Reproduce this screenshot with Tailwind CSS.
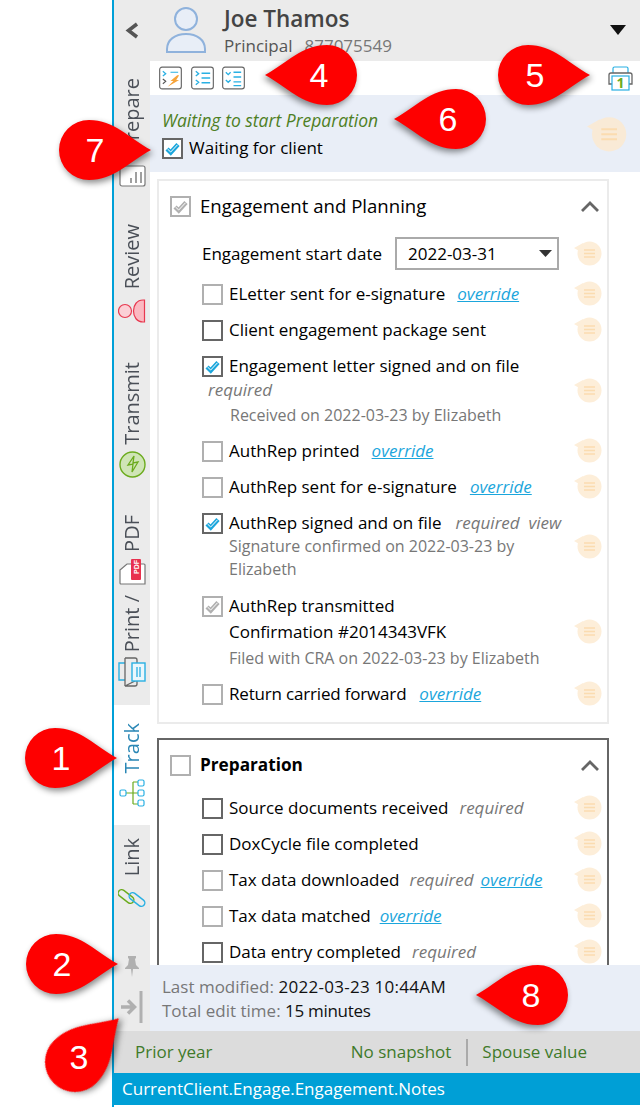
<!DOCTYPE html>
<html lang="en">
<head>
<meta charset="UTF-8">
<title>Track</title>
<script src="https://cdn.jsdelivr.net/npm/@tailwindcss/browser@4"></script>
</head>
<body class="bg-white font-['Open_Sans',sans-serif] text-[17px] text-black">
<svg class="hidden">
  <symbol id="drop" viewBox="0 0 92 60"><path d="M92 30C70 42 55 60 30 60A30 30 0 0 1 30 0C55 0 70 18 92 30Z" fill="#fe0000"/></symbol>
  <symbol id="note" viewBox="0 0 28 28"><circle cx="15.500" cy="13.500" r="12" fill="currentColor"/><path d="M0 8 9 3 7 12Z" fill="currentColor"/><path d="M10 10h11M10 13.500h11M10 17h11" stroke="#fbdcb0" stroke-width="1.300"/></symbol>
  <symbol id="tick" viewBox="0 0 21 21"><path d="M5 11 8.700 14.500 16 6.500" fill="none" stroke="currentColor" stroke-width="4.400"/><path d="M5.500 11 8.700 14 15.500 6.800" fill="none" stroke="#fff" stroke-width="1"/></symbol>
</svg>

<div class="relative h-[1107px] w-[640px] overflow-hidden">
  <div class="ml-[112px] flex h-full flex-col border-l-2 border-[#00a0d8]">
    <div class="flex h-[1031px]">

      <!-- side tabs -->
      <div class="flex w-[36px] shrink-0 flex-col items-center bg-[#ebebeb] text-[20px] text-[#4a4f57]">
        <div class="flex h-[61px] w-full items-center justify-center">
          <svg class="mt-[-1px]" width="14" height="17" viewBox="0 0 14 17"><path d="M12 2 3.500 8.500 12 15" fill="none" stroke="#555" stroke-width="3.600"/></svg>
        </div>
        <div class="flex h-[163px] w-full flex-col items-center pt-[17px]">
          <span class="rotate-180 leading-[36px] [writing-mode:vertical-rl]">Prepare</span>
          <svg class="mt-[13px]" width="27" height="22" viewBox="0 0 27 22"><rect x="1" y="1" width="25" height="20" rx="2" fill="#fff" stroke="#777" stroke-width="1.200"/><path d="M12 18v-5M17 18V7M22 18V7" stroke="#777" stroke-width="1.400"/></svg>
        </div>
        <div class="flex h-[138px] w-full flex-col items-center">
          <span class="rotate-180 leading-[36px] [writing-mode:vertical-rl]">Review</span>
          <svg class="mt-[10px]" width="28" height="24" viewBox="0 0 28 24"><circle cx="7" cy="12" r="6.500" fill="#fbd0d6" stroke="#e8384f" stroke-width="1.200"/><path d="M26.500 1v22H25C19 23 15.500 18 15.500 12S19 1 25 1Z" fill="#fbb9c1" stroke="#e8384f" stroke-width="1.200"/></svg>
        </div>
        <div class="flex h-[153px] w-full flex-col items-center">
          <span class="rotate-180 leading-[36px] [writing-mode:vertical-rl]">Transmit</span>
          <svg class="mt-[6px]" width="27" height="27" viewBox="0 0 27 27"><circle cx="13.500" cy="13.500" r="12.500" fill="#cfe5b6" stroke="#6bab1d" stroke-width="1.400"/><path d="M15 5 9 14l5-1-1 8 6-10-5 1Z" fill="#cfe5b6" stroke="#6bab1d" stroke-width="1.300"/></svg>
        </div>
        <div class="flex h-[190px] w-full flex-col items-center">
          <span class="rotate-180 leading-[36px] [writing-mode:vertical-rl]">PDF</span>
          <svg class="mt-[7px]" width="27" height="26" viewBox="0 0 27 26"><path d="M1 11 8 5h17a1 1 0 0 1 1 1v19H2a1 1 0 0 1-1-1Z" fill="#fff" stroke="#777" stroke-width="1.200"/><rect x="12" y="0" width="10" height="21" rx="1" fill="#e8304e"/><text x="-15" y="19.500" transform="rotate(-90)" fill="#fff" font-size="7" font-weight="700" font-family="Liberation Sans">PDF</text></svg>
          <span class="mt-[10px] rotate-180 leading-[36px] [writing-mode:vertical-rl]">Print /</span>
          <svg class="mt-[5px]" width="28" height="30" viewBox="0 0 28 30"><path d="M7 6H1v17h6" fill="none" stroke="#29b0e3" stroke-width="1.400"/><path d="M7 1h10a2 2 0 0 1 2 2v3M19 23v4a2 2 0 0 1-2 2H7Z" fill="none" stroke="#666" stroke-width="1.300"/><path d="M7 1v28" stroke="#666" stroke-width="1.300"/><rect x="14" y="6" width="13" height="18" fill="#eaf7fc" stroke="#29b0e3" stroke-width="1.400"/><path d="M19 10v10M22 10v10" stroke="#29b0e3" stroke-width="1.300"/></svg>
        </div>
        <div class="flex h-[120px] w-full flex-col items-center bg-white pt-[18px] text-[#2a87b5]">
          <span class="rotate-180 leading-[36px] [writing-mode:vertical-rl]">Track</span>
          <svg class="mt-[6px]" width="26" height="28" viewBox="0 0 26 28"><path d="M7 14h13M14 3v22M14 3h5M14 25h5" stroke="#6bab1d" stroke-width="1.200" fill="none"/><rect x="1" y="11" width="6" height="6" rx="1.500" fill="#fff" stroke="#29b0e3" stroke-width="1.200"/><rect x="19" y="1" width="6" height="6" rx="1.500" fill="#fff" stroke="#29b0e3" stroke-width="1.200"/><rect x="19" y="11" width="6" height="6" rx="1.500" fill="#fff" stroke="#29b0e3" stroke-width="1.200"/><rect x="19" y="21" width="6" height="6" rx="1.500" fill="#fff" stroke="#29b0e3" stroke-width="1.200"/></svg>
        </div>
        <div class="flex w-full flex-col items-center pt-[13px]">
          <span class="rotate-180 leading-[36px] [writing-mode:vertical-rl]">Link</span>
          <svg class="mt-[11px]" width="28" height="22" viewBox="0 0 28 22"><rect x="-1" y="6" width="18" height="7" rx="3.500" transform="rotate(38 8 9.500)" fill="none" stroke="#6bab1d" stroke-width="1.400"/><rect x="10" y="9" width="18" height="7" rx="3.500" transform="rotate(38 19 12.500)" fill="none" stroke="#29b0e3" stroke-width="1.400"/></svg>
        </div>
        <div class="mt-auto flex flex-col items-center pb-[8px]">
          <svg width="14" height="21" viewBox="0 0 14 21"><path d="M3 0h8v2l-1 1 1 6 3 3v1H8l-1 8-1-8H0v-1l3-3 1-6-1-1Z" fill="#b0b0b0"/></svg>
          <svg class="mt-[14px]" width="22" height="32" viewBox="0 0 22 32"><path d="M0 16h12M7 9.500l6.500 6.500L7 22.500" fill="none" stroke="#b0b0b0" stroke-width="3.500"/><path d="M20 0v32" stroke="#b0b0b0" stroke-width="3"/></svg>
        </div>
      </div>

      <!-- main panel -->
      <div class="flex min-w-0 flex-1 flex-col">
        <div class="flex h-[61px] shrink-0 bg-[#ebebeb] pl-[16px] pr-[14px]">
          <svg class="mt-[6px]" width="40" height="47" viewBox="0 0 40 47"><circle cx="20" cy="13" r="11" fill="#e8eef7" stroke="#8fb2dc" stroke-width="2"/><path d="M1 46v-3c0-9 8-15 19-15s19 6 19 15v3Z" fill="#e8eef7" stroke="#8fb2dc" stroke-width="2"/></svg>
          <div class="ml-[18px] flex flex-col">
            <span class="mt-[4px] text-[22.500px] font-semibold leading-[29px] text-[#444]">Joe Thamos</span>
            <div class="mt-[1px] flex text-[17px] leading-[24px]"><span class="text-[#555]">Principal</span><span class="ml-[12px] text-[#777]">877075549</span></div>
          </div>
          <svg class="ml-auto mt-[25px]" width="16" height="10" viewBox="0 0 16 10"><path d="M0 0h16L8 10Z" fill="#111"/></svg>
        </div>

        <div class="flex h-[34px] shrink-0 items-center bg-white pl-[9px] pr-[7px]">
          <svg width="23" height="24" viewBox="0 0 24 24"><rect x=".7" y=".7" width="22.600" height="22.600" rx="2.500" fill="#fff" stroke="#666" stroke-width="1.200"/><path d="M4 5l3 2.500L4 10M12 6h8" fill="none" stroke="#29b0e3" stroke-width="1.300"/><path d="M4 13l3 2.500L4 18" fill="none" stroke="#555" stroke-width="1.200"/><path d="M19 9l-7 6h3l-6 6 12-7h-3l3-5Z" fill="#f6a33a"/></svg>
          <svg class="ml-[9px]" width="23" height="24" viewBox="0 0 24 24"><rect x=".7" y=".7" width="22.600" height="22.600" rx="2.500" fill="#fff" stroke="#666" stroke-width="1.200"/><path d="M5 5l3 2.500L5 10M5 14l3 2.500L5 19M11 7h9M11 12h9M11 17h9" fill="none" stroke="#29b0e3" stroke-width="1.400"/></svg>
          <svg class="ml-[8px]" width="23" height="24" viewBox="0 0 24 24"><rect x=".7" y=".7" width="22.600" height="22.600" rx="2.500" fill="#fff" stroke="#666" stroke-width="1.200"/><path d="M4 6l2.500 2.500L9 6M4 14l2.500 2.500L9 14M12 6h8M12 11h8M12 16h8M12 20h8" fill="none" stroke="#29b0e3" stroke-width="1.400"/></svg>
          <svg class="ml-auto" width="25" height="25" viewBox="0 0 25 25"><rect x="5" y="1" width="15" height="8" rx="1.500" fill="#fff" stroke="#29b0e3" stroke-width="1.200"/><path d="M4 18H1V9a2 2 0 0 1 2-2h19a2 2 0 0 1 2 2v9h-3" fill="#fff" stroke="#666" stroke-width="1.300"/><rect x="4" y="10" width="17" height="14" fill="#fff" stroke="#29b0e3" stroke-width="1.200"/><text x="12.500" y="21.500" text-anchor="middle" fill="#6bab1d" font-size="14" font-weight="700" font-family="Open Sans">1</text></svg>
        </div>

        <div class="flex h-[77px] shrink-0 bg-[#e9eef7] pl-[12px] pr-[13px]">
          <div>
            <div class="mt-[12px] text-[17.500px] italic leading-[26px] text-[#4e7f24]">Waiting to start Preparation</div>
            <div class="mt-[3px] flex items-center">
              <span class="block h-[21px] w-[21px] border-2 border-[#666] bg-white text-[#1ba6dc]"><svg class="-m-[2px]" width="21" height="21"><use href="#tick"/></svg></span>
              <span class="ml-[6px] leading-[24px]">Waiting for client</span>
            </div>
          </div>
          <svg class="ml-auto mt-[20px] text-[#f9ead6]" width="40" height="40"><use href="#note"/></svg>
        </div>

        <!-- scrolling checklist -->
        <div class="min-h-0 flex-1 overflow-hidden bg-white pl-[7px] pr-[31px] pt-[7px]">
          <section class="h-[545px] border-2 border-[#ebebeb] pr-[5px]">
            <div class="flex h-[50px] items-center pl-[11px]">
              <span class="block h-[21px] w-[21px] border-2 border-[#b0b0b0] text-[#b0b0b0]"><svg class="-m-[2px]" width="21" height="21"><use href="#tick"/></svg></span>
              <span class="ml-[9px] text-[18.600px]">Engagement and Planning</span>
              <svg class="ml-auto mr-[3px]" width="18" height="11" viewBox="0 0 18 11"><path d="M1 10l8-8 8 8" fill="none" stroke="#666" stroke-width="2.800"/></svg>
            </div>
            <div class="flex h-[45px] items-center pl-[43px]">
              <span>Engagement start date</span>
              <div class="ml-[13px] flex h-[33px] w-[164px] items-center border-2 border-[#aaa] pl-[11px] pr-[5px]"><span>2022-03-31</span><svg class="ml-auto" width="13" height="7" viewBox="0 0 13 7"><path d="M0 0h13L6.500 7Z" fill="#333"/></svg></div>
              <svg class="ml-auto text-[#fdeed9]" width="28" height="28"><use href="#note"/></svg>
            </div>
            <div class="flex h-[36px] items-center pl-[43px]">
              <span class="h-[21px] w-[21px] border-2 border-[#b0b0b0]"></span><span class="ml-[6px]">ELetter sent for e-signature</span><a class="ml-[12px] italic text-[#1ba6dc] underline">override</a>
              <svg class="ml-auto text-[#fdeed9]" width="28" height="28"><use href="#note"/></svg>
            </div>
            <div class="flex h-[36px] items-center pl-[43px]">
              <span class="h-[21px] w-[21px] border-2 border-[#666]"></span><span class="ml-[6px]">Client engagement package sent</span>
              <svg class="ml-auto text-[#fdeed9]" width="28" height="28"><use href="#note"/></svg>
            </div>
            <div class="flex h-[85px] items-center pl-[43px]">
              <div class="leading-[24.500px]">
                <div class="flex items-center"><span class="block h-[21px] w-[21px] border-2 border-[#666] text-[#1ba6dc]"><svg class="-m-[2px]" width="21" height="21"><use href="#tick"/></svg></span><span class="ml-[6px]">Engagement letter signed and on file</span></div>
                <div class="ml-[6px] italic text-[#777]">required</div>
                <div class="ml-[28px] text-[16px] text-[#777]">Received on 2022-03-23 by Elizabeth</div>
              </div>
              <svg class="ml-auto text-[#fdeed9]" width="28" height="28"><use href="#note"/></svg>
            </div>
            <div class="flex h-[36px] items-center pl-[43px]">
              <span class="h-[21px] w-[21px] border-2 border-[#b0b0b0]"></span><span class="ml-[6px]">AuthRep printed</span><a class="ml-[12px] italic text-[#1ba6dc] underline">override</a>
              <svg class="ml-auto text-[#fdeed9]" width="28" height="28"><use href="#note"/></svg>
            </div>
            <div class="flex h-[36px] items-center pl-[43px]">
              <span class="h-[21px] w-[21px] border-2 border-[#b0b0b0]"></span><span class="ml-[6px]">AuthRep sent for e-signature</span><a class="ml-[13px] italic text-[#1ba6dc] underline">override</a>
              <svg class="ml-auto text-[#fdeed9]" width="28" height="28"><use href="#note"/></svg>
            </div>
            <div class="flex h-[83px] items-center pl-[43px]">
              <div class="leading-[23.500px]">
                <div class="flex items-center"><span class="block h-[21px] w-[21px] border-2 border-[#666] text-[#1ba6dc]"><svg class="-m-[2px]" width="21" height="21"><use href="#tick"/></svg></span><span class="ml-[6px]">AuthRep signed and on file</span><span class="ml-[14px] italic text-[#777]">required&nbsp; view</span></div>
                <div class="ml-[27px] w-[310px] text-[16px] text-[#777]">Signature confirmed on 2022-03-23 by Elizabeth</div>
              </div>
              <svg class="ml-auto text-[#fdeed9]" width="28" height="28"><use href="#note"/></svg>
            </div>
            <div class="flex h-[88px] items-center pl-[43px]">
              <div class="leading-[26px]">
                <div class="flex items-center"><span class="block h-[21px] w-[21px] border-2 border-[#b0b0b0] text-[#b0b0b0]"><svg class="-m-[2px]" width="21" height="21"><use href="#tick"/></svg></span><span class="ml-[6px]">AuthRep transmitted</span></div>
                <div class="ml-[27px]">Confirmation #2014343VFK</div>
                <div class="ml-[27px] text-[16px] text-[#777]">Filed with CRA on 2022-03-23 by Elizabeth</div>
              </div>
              <svg class="ml-auto text-[#fdeed9]" width="28" height="28"><use href="#note"/></svg>
            </div>
            <div class="flex h-[36px] items-center pl-[43px]">
              <span class="h-[21px] w-[21px] border-2 border-[#b0b0b0]"></span><span class="ml-[6px] tracking-[-0.180px]">Return carried forward</span><a class="ml-[13px] italic text-[#1ba6dc] underline">override</a>
              <svg class="ml-auto text-[#fdeed9]" width="28" height="28"><use href="#note"/></svg>
            </div>
          </section>

          <section class="mt-[14px] h-[400px] border-2 border-[#666] pr-[5px]">
            <div class="flex h-[50px] items-center pl-[11px]">
              <span class="h-[21px] w-[21px] border-2 border-[#b0b0b0]"></span>
              <span class="ml-[9px] text-[17.200px] font-bold">Preparation</span>
              <svg class="ml-auto mr-[3px]" width="18" height="11" viewBox="0 0 18 11"><path d="M1 10l8-8 8 8" fill="none" stroke="#666" stroke-width="2.800"/></svg>
            </div>
            <div class="flex h-[36px] items-center pl-[43px]">
              <span class="h-[21px] w-[21px] border-2 border-[#666]"></span><span class="ml-[6px]">Source documents received</span><span class="ml-[11px] italic text-[#777]">required</span>
              <svg class="ml-auto text-[#fdeed9]" width="28" height="28"><use href="#note"/></svg>
            </div>
            <div class="flex h-[36px] items-center pl-[43px]">
              <span class="h-[21px] w-[21px] border-2 border-[#666]"></span><span class="ml-[6px]">DoxCycle file completed</span>
              <svg class="ml-auto text-[#fdeed9]" width="28" height="28"><use href="#note"/></svg>
            </div>
            <div class="flex h-[36px] items-center pl-[43px]">
              <span class="h-[21px] w-[21px] border-2 border-[#b0b0b0]"></span><span class="ml-[6px]">Tax data downloaded</span><span class="ml-[10px] italic text-[#777]">required</span><a class="ml-[7px] italic text-[#1ba6dc] underline">override</a>
              <svg class="ml-auto text-[#fdeed9]" width="28" height="28"><use href="#note"/></svg>
            </div>
            <div class="flex h-[36px] items-center pl-[43px]">
              <span class="h-[21px] w-[21px] border-2 border-[#b0b0b0]"></span><span class="ml-[6px]">Tax data matched</span><a class="ml-[9px] italic text-[#1ba6dc] underline">override</a>
              <svg class="ml-auto text-[#fdeed9]" width="28" height="28"><use href="#note"/></svg>
            </div>
            <div class="flex h-[36px] items-center pl-[43px]">
              <span class="h-[21px] w-[21px] border-2 border-[#666]"></span><span class="ml-[6px]">Data entry completed</span><span class="ml-[11px] italic text-[#777]">required</span>
              <svg class="ml-auto text-[#fdeed9]" width="28" height="28"><use href="#note"/></svg>
            </div>
          </section>
        </div>

        <div class="h-[66px] shrink-0 bg-[#e9eef7] pl-[12px] pt-[10px] text-[17px] leading-[24px] text-[#777]">
          <div>Last modified: <span class="tracking-[0.280px] text-[#111]">2022-03-23 10:44AM</span></div>
          <div>Total edit time: <span class="tracking-[-0.300px] text-[#111]">15 minutes</span></div>
        </div>
      </div>
    </div>

    <div class="flex h-[42px] shrink-0 items-center bg-[#dcdcdc] pl-[21px] text-[#3f7a2a]">
      <span>Prior year</span>
      <span class="ml-auto">No snapshot</span>
      <span class="ml-[15px] h-[27px] w-[2px] bg-[#aaa]"></span>
      <span class="ml-[14px] mr-[53px]">Spouse value</span>
    </div>
    <div class="flex h-[32px] shrink-0 items-center bg-[#009fd6] pl-[8px] text-white">CurrentClient.Engage.Engagement.Notes</div>
  </div>

  <!-- numbered callouts -->
  <div class="absolute left-[25px] top-[728px] h-[60px] w-[92px]"><svg class="drop-shadow-[2px_3px_3px_rgba(0,0,0,0.45)]" width="92" height="60"><use href="#drop"/></svg><span class="absolute left-0 top-0 w-[72px] text-center font-['Liberation_Sans',sans-serif] text-[34px] leading-[60px] text-white">1</span></div>
  <div class="absolute left-[26px] top-[934px] h-[60px] w-[92px]"><svg class="drop-shadow-[2px_3px_3px_rgba(0,0,0,0.45)]" width="92" height="60"><use href="#drop"/></svg><span class="absolute left-0 top-0 w-[72px] text-center font-['Liberation_Sans',sans-serif] text-[34px] leading-[60px] text-white">2</span></div>
  <div class="absolute left-[45px] top-[1032px] h-[60px] w-[92px]"><svg class="origin-[30px_30px] -rotate-45 drop-shadow-[2px_3px_3px_rgba(0,0,0,0.45)]" width="92" height="60"><use href="#drop"/></svg><span class="absolute left-0 top-0 w-[68px] text-center font-['Liberation_Sans',sans-serif] text-[34px] leading-[50px] text-white">3</span></div>
  <div class="absolute left-[265px] top-[45px] h-[60px] w-[92px]"><svg class="-scale-x-100 drop-shadow-[2px_3px_3px_rgba(0,0,0,0.45)]" width="92" height="60"><use href="#drop"/></svg><span class="absolute right-0 top-0 w-[76px] text-center font-['Liberation_Sans',sans-serif] text-[34px] leading-[60px] text-white">4</span></div>
  <div class="absolute left-[498px] top-[45px] h-[60px] w-[92px]"><svg class="drop-shadow-[2px_3px_3px_rgba(0,0,0,0.45)]" width="92" height="60"><use href="#drop"/></svg><span class="absolute left-0 top-0 w-[74px] text-center font-['Liberation_Sans',sans-serif] text-[34px] leading-[60px] text-white">5</span></div>
  <div class="absolute left-[394px] top-[89px] h-[60px] w-[92px]"><svg class="-scale-x-100 drop-shadow-[2px_3px_3px_rgba(0,0,0,0.45)]" width="92" height="60"><use href="#drop"/></svg><span class="absolute right-0 top-0 w-[76px] text-center font-['Liberation_Sans',sans-serif] text-[34px] leading-[60px] text-white">6</span></div>
  <div class="absolute left-[59px] top-[120px] h-[60px] w-[92px]"><svg class="drop-shadow-[2px_3px_3px_rgba(0,0,0,0.45)]" width="92" height="60"><use href="#drop"/></svg><span class="absolute left-0 top-0 w-[72px] text-center font-['Liberation_Sans',sans-serif] text-[34px] leading-[60px] text-white">7</span></div>
  <div class="absolute left-[476px] top-[965px] h-[60px] w-[92px]"><svg class="-scale-x-100 drop-shadow-[2px_3px_3px_rgba(0,0,0,0.45)]" width="92" height="60"><use href="#drop"/></svg><span class="absolute right-0 top-0 w-[74px] text-center font-['Liberation_Sans',sans-serif] text-[34px] leading-[60px] text-white">8</span></div>
</div>
</body>
</html>
